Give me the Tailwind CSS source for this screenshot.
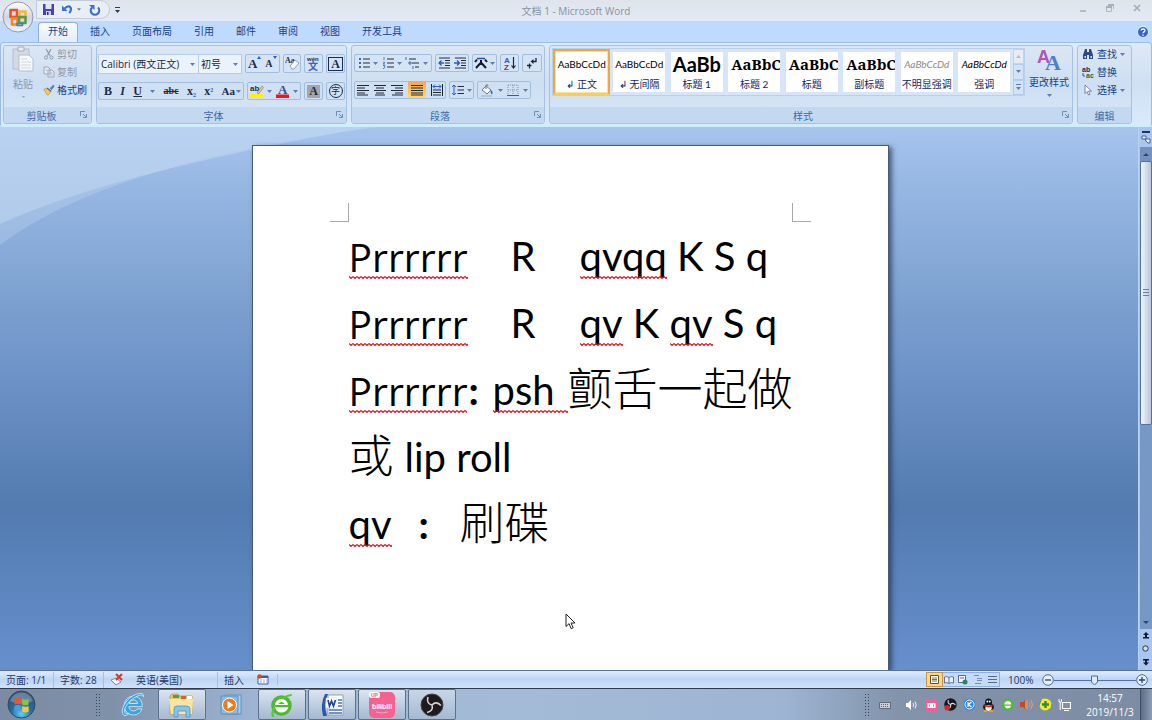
<!DOCTYPE html>
<html lang="zh-CN">
<head>
<meta charset="utf-8">
<title>文档 1 - Microsoft Word</title>
<script src="https://cdn.jsdelivr.net/npm/@tailwindcss/browser@4"></script>
</head>
<body class="flex h-screen flex-col overflow-hidden bg-[#bfd9fe] font-['Open_Sans','Noto_Sans_CJK_SC',sans-serif] text-[10px] leading-4 text-[#15428b] select-none">

<svg class="absolute" width="0" height="0">
  <defs>
    <pattern id="wave" width="4" height="3" patternUnits="userSpaceOnUse"><path d="M0 .5L2 2.5L4 .5" fill="none" stroke="#dc1420" stroke-width="1.200"/></pattern>
    <linearGradient id="orb" x1="0" y1="0" x2="0" y2="1"><stop offset="0" stop-color="#fff"/><stop offset=".5" stop-color="#cfd6e2"/><stop offset="1" stop-color="#f2f5fa"/></linearGradient>
    <radialGradient id="winorb" cx=".5" cy=".85" r=".8"><stop offset="0" stop-color="#5fd0f5"/><stop offset=".5" stop-color="#23699f"/><stop offset="1" stop-color="#39536f"/></radialGradient>
  </defs>
  <symbol id="caret" viewBox="0 0 5 3"><path d="M0 0h5L2.500 3z" fill="#5a7fb5"/></symbol>
  <symbol id="launch" viewBox="0 0 7 7"><path d="M.5 5V.5H5M3 3l3 3M6.500 3v3.500H3" fill="none" stroke="#6c8fc0"/></symbol>
  <symbol id="cut" viewBox="0 0 12 12"><path d="M3 1l4 6.500M8 1L4.500 7.500" stroke="#8e9aae" stroke-width="1.300" fill="none"/><circle cx="3" cy="9.500" r="1.600" fill="none" stroke="#8e9aae"/><circle cx="8.500" cy="9.500" r="1.600" fill="none" stroke="#8e9aae"/></symbol>
  <symbol id="copy" viewBox="0 0 12 12"><path d="M1 1h4l2 2v5H1zM5 4h4l2 2v5H5z" fill="#e9eef6" stroke="#9aa6ba"/><path d="M6.500 7h3M6.500 9h3M2.500 4h2" stroke="#a9b4c6"/></symbol>
  <symbol id="brush" viewBox="0 0 14 12"><path d="M8 4l4-4 1.500 1.500L10 6z" fill="#5779b8"/><path d="M5 3l5 4-1 1.500L4 5z" fill="#49608a"/><path d="M1 5l3-1 5 4-3 4-2-1-1-2z" fill="#efc75c" stroke="#b98a2c" stroke-width=".6"/></symbol>
  <symbol id="bullets" viewBox="0 0 12 12"><path d="M5 2h7M5 6h7M5 10h7" stroke="#222c40" stroke-width="1.200"/><path d="M1 1h2v2H1zM1 5h2v2H1zM1 9h2v2H1z" fill="#4068b0"/></symbol>
  <symbol id="numbers" viewBox="0 0 12 12"><path d="M5 2h7M5 6h7M5 10h7" stroke="#222c40" stroke-width="1.200"/><path d="M2 0v3M1 5h1.500v1L1 7h2M1 8.500h2L2 10l1 .5-1 1H1" fill="none" stroke="#4068b0" stroke-width=".8"/></symbol>
  <symbol id="multi" viewBox="0 0 14 12"><path d="M4 2h7M7 6h7M10 10h4" stroke="#222c40" stroke-width="1.200"/><path d="M1 0v3M4 5h2v2H4zM8 9v3" fill="none" stroke="#4068b0"/></symbol>
  <symbol id="outdent" viewBox="0 0 12 12"><path d="M1 1h11M7 3.500h5M7 6h5M7 8.500h5M1 11h11" stroke="#222c40"/><path d="M6 6H1M3.500 3.500L1 6l2.500 2.500" stroke="#2a5cc0" stroke-width="1.300" fill="none"/></symbol>
  <symbol id="indent" viewBox="0 0 12 12"><path d="M1 1h11M7 3.500h5M7 6h5M7 8.500h5M1 11h11" stroke="#222c40"/><path d="M0 6h5M3 3.500L5.500 6 3 8.500" stroke="#2a5cc0" stroke-width="1.300" fill="none"/></symbol>
  <symbol id="aleft" viewBox="0 0 12 12"><path d="M0 1.500h12M0 4h8M0 6.500h12M0 9h8M0 11h11" stroke="#1d2638" stroke-width="1.200"/></symbol>
  <symbol id="acenter" viewBox="0 0 12 12"><path d="M0 1.500h12M2 4h8M0 6.500h12M2 9h8M1 11h10" stroke="#1d2638" stroke-width="1.200"/></symbol>
  <symbol id="aright" viewBox="0 0 12 12"><path d="M0 1.500h12M4 4h8M0 6.500h12M4 9h8M1 11h11" stroke="#1d2638" stroke-width="1.200"/></symbol>
  <symbol id="ajust" viewBox="0 0 12 12"><path d="M0 1.500h12M0 4h12M0 6.500h12M0 9h12M0 11h12" stroke="#1d2638" stroke-width="1.200"/></symbol>
  <symbol id="adist" viewBox="0 0 12 12"><path d="M.5 0v12M11.500 0v12M2 6h8M2 8.500h8M2 11h8" stroke="#1d2638" stroke-width="1.100"/><path d="M2 2.500h8M4 .5L2 2.500l2 2M8 .5l2 2-2 2" stroke="#2a5cc0" fill="none"/></symbol>
  <symbol id="spacing" viewBox="0 0 12 12"><path d="M5.500 2.500H12M5.500 6H12M5.500 9.500H12" stroke="#222c40" stroke-width="1.200"/><path d="M2 1v10M0 3l2-2 2 2M0 9l2 2 2-2" fill="none" stroke="#2a5cc0"/></symbol>
  <symbol id="win" viewBox="0 0 12 12"><path d="M1 2q2-1.500 4.500 0v4Q3 4.800 1 6z" fill="#e8582a"/><path d="M6.500 2Q9 3.200 11 2v4Q9 7.200 6.500 6z" fill="#8cc04a"/><path d="M1 7q2-1.200 4.500 0v4Q3 9.800 1 11z" fill="#4a9be0"/><path d="M6.500 7Q9 8.200 11 7v4Q9 12.200 6.500 11z" fill="#f6c63c"/></symbol>
  <symbol id="eglyph" viewBox="0 0 24 24"><path d="M20.500 13.500H8.200c.3 2.600 2 4 4.200 4 1.800 0 2.900-.7 3.600-1.900h4.200C19 19.300 16 21.200 12.300 21.200 7.300 21.200 4 17.600 4 12.600 4 7.500 7.500 4 12.400 4c5 0 8.300 3.500 8.100 9.500zM8.400 10.600h8c-.3-2-1.700-3.300-4-3.300s-3.700 1.300-4 3.300z"/><path d="M3.500 21.500C-1 17 6 5.500 14.500 2.300 18.500.8 22.300.8 21.600 4.300c0-1.800-2.500-2-6.100-.3C8.500 7.500 3.500 14.500 4.200 18.200c.4 2 2.500 2 4.300 1.400-1.500 1.600-3.600 2.600-5 1.900z"/></symbol>
</svg>

<!-- Title bar -->
<header class="flex shrink-0 bg-gradient-to-b from-[#dfe4ec] to-[#e3eaf5]">
  <div class="relative flex h-[21px] w-full items-center">
    <button class="absolute top-px left-[2px] z-10" aria-label="Office 按钮">
      <svg width="32" height="32" viewBox="0 0 32 32"><circle cx="16" cy="16" r="15" fill="url(#orb)" stroke="#8d9bb3"/><g fill="none" stroke-width="2.600" stroke-linejoin="round"><path d="M8.500 9h6.500v7H8.500z" stroke="#e8532a"/><path d="M17.500 10.500h6v6h-6z" stroke="#f4b63a"/><path d="M10 17.500h5.500v6H10z" stroke="#f08a2a"/><path d="M17 16h6.500v6H17z" stroke="#5a9a48"/><path d="M15 22.500h5.500v2H15z" stroke="#3f7fd0" stroke-width="1.600"/></g></svg>
    </button>
    <div class="ml-9 flex h-[19px] items-center gap-[8px] self-start rounded-r-full border border-[#c3cbd9] bg-[#e9edf4] pr-2 pl-[6px]">
      <button aria-label="保存"><svg width="11" height="11" viewBox="0 0 11 11"><path d="M0 0h11v11H0z" fill="#4b44a8"/><path d="M2.500 0h6v5h-6z" fill="#dfe4f6"/><path d="M3 7h5v4H3z" fill="#c9cfe8"/><path d="M4 8h1.500v3H4z" fill="#332c80"/></svg></button>
      <button class="flex items-center gap-1" aria-label="撤消"><svg width="11" height="11" viewBox="0 0 12 11"><path d="M3 4.500C8-1 12 4 8 9.500" fill="none" stroke="#3b6fce" stroke-width="2.400"/><path d="M0 1v6h6z" fill="#3b6fce"/></svg><svg width="4" height="3"><use href="#caret"/></svg></button>
      <button aria-label="恢复"><svg width="12" height="12" viewBox="0 0 12 12"><path d="M9 3.500a4.200 4.200 0 1 1-6 0" fill="none" stroke="#3b6fce" stroke-width="2.200"/><path d="M0 1h5.500v5z" fill="#3b6fce"/></svg></button>
    </div>
    <svg class="ml-[5px]" width="5" height="7" viewBox="0 0 5 7"><path d="M0 .5h5" stroke="#2b3a55"/><path d="M0 3h5L2.500 6z" fill="#2b3a55"/></svg>
    <h1 class="absolute inset-x-0 top-[3px] text-center text-[10px] text-[#8b92a0]">文档 1 - Microsoft Word</h1>
    <div class="absolute top-[3px] right-[11px] flex gap-[19px] text-[#8d94a0]">
      <button aria-label="最小化"><svg width="8" height="10" viewBox="0 0 8 10"><path d="M1 8h6" stroke="#a7acb5" stroke-width="1.500"/></svg></button>
      <button aria-label="还原"><svg width="8" height="10" viewBox="0 0 8 10"><path d="M2 2h5.500v4M.5 4h5v4.500h-5z" fill="none" stroke="#b3b8c0"/><path d="M2 2h6M0 4h6" stroke="#a0a6b0" stroke-width="1.300"/></svg></button>
      <button aria-label="关闭"><svg width="8" height="10" viewBox="0 0 8 10"><path d="M1 2l6 6M7 2L1 8" stroke="#a7acb5" stroke-width="1.600"/></svg></button>
    </div>
  </div>
</header>

<!-- Ribbon tabs -->
<nav class="flex h-[21px] shrink-0 items-end bg-[#bfdaff] pr-[3px] pl-[38px] text-[#15428b]">
  <a href="#" class="h-[20px] rounded-t-sm border border-b-0 border-[#8db2e3] bg-gradient-to-b from-[#f7fbff] to-[#e2edf9] px-[9px] leading-4">开始</a>
  <a href="#" class="h-[20px] pr-[11px] pl-[12px] leading-[18px]">插入</a>
  <a href="#" class="h-[20px] px-[11px] leading-[18px]">页面布局</a>
  <a href="#" class="h-[20px] px-[11px] leading-[18px]">引用</a>
  <a href="#" class="h-[20px] px-[11px] leading-[18px]">邮件</a>
  <a href="#" class="h-[20px] px-[11px] leading-[18px]">审阅</a>
  <a href="#" class="h-[20px] px-[11px] leading-[18px]">视图</a>
  <a href="#" class="h-[20px] px-[11px] leading-[18px]">开发工具</a>
  <button class="mb-1 ml-auto" aria-label="帮助"><svg width="12" height="12" viewBox="0 0 12 12"><circle cx="6" cy="6" r="5.500" fill="#2f62c4" stroke="#e8f0ff"/><path d="M4 4.500c.3-2 4-2 4 0C8 6 6 5.800 6 7.300M6 8.500v1.300" stroke="#fff" stroke-width="1.400" fill="none"/></svg></button>
</nav>

<!-- Ribbon -->
<section class="flex h-[85px] shrink-0 gap-1 rounded-sm border border-b-2 border-[#9dbde8] border-b-[#c8f0fb] bg-gradient-to-b from-[#dfe9f7] via-[#cfe0f3] to-[#d8ebfb] pt-[2px] pr-1 pb-px pl-[2px]">

  <div class="flex w-[89px] shrink-0 flex-col overflow-hidden rounded-[3px] border border-[#a6c2e3] bg-gradient-to-b from-[#dbe6f4] via-[#cddff2] to-[#d6e7f6]">
    <div class="flex flex-1 gap-[9px] pl-2 text-[#8e97a6]">
      <button class="flex flex-col items-center leading-[14px]">
        <svg width="22" height="26" viewBox="0 0 22 26"><path d="M1 3h16v20H1z" fill="#d3dae5" stroke="#b4bfce"/><path d="M6 1h6v4H6z" fill="#e9edf3" stroke="#a1adbf"/><path d="M7 9h10l4 4v12H7z" fill="#f6f8fb" stroke="#b4bfce"/><path d="M9 13h6M9 16h10M9 19h10M9 22h10" stroke="#d0d8e4"/></svg>
        <span class="mt-[5px]">粘贴</span>
        <svg width="3" height="2" class="mt-[5px] opacity-60"><use href="#caret"/></svg>
      </button>
      <div class="flex flex-col gap-[2px]">
        <button class="flex h-4 items-center gap-[2px]"><svg width="12" height="12"><use href="#cut"/></svg>剪切</button>
        <button class="flex h-4 items-center gap-[2px]"><svg width="12" height="12"><use href="#copy"/></svg>复制</button>
        <button class="flex h-4 items-center gap-[2px] text-[#15428b]"><svg width="12" height="12"><use href="#brush"/></svg>格式刷</button>
      </div>
    </div>
    <div class="relative h-[16px] bg-[#c2d9f1] pr-3 text-center leading-[18px] text-[#3e6aaa]">剪贴板<button class="absolute top-1 right-[4px]" aria-label="剪贴板选项"><svg width="7" height="7"><use href="#launch"/></svg></button></div>
  </div>

  <div class="flex w-[251px] shrink-0 flex-col overflow-hidden rounded-[3px] border border-[#a6c2e3] bg-gradient-to-b from-[#dbe6f4] via-[#cddff2] to-[#d6e7f6]">
    <div class="flex flex-1 flex-col gap-[8px] px-px pt-2">
      <div class="flex gap-[3px]">
        <div class="flex">
          <label class="relative flex h-[20px] items-center border border-[#b6cde9] bg-[#eaf2fb]"><select aria-label="字体" class="w-[99px] appearance-none bg-transparent pl-[2px] text-[10px] text-[#1b2a48]"><option>Calibri (西文正文)</option></select><svg class="absolute right-[3px]" width="5" height="3"><use href="#caret"/></svg></label>
          <label class="relative flex h-[20px] items-center border border-l-0 border-[#b6cde9] bg-[#eaf2fb]"><select aria-label="字号" class="w-[42px] appearance-none bg-transparent pl-[2px] text-[10px] text-[#1b2a48]"><option>初号</option></select><svg class="absolute right-[3px]" width="5" height="3"><use href="#caret"/></svg></label>
        </div>
        <div class="flex h-[19px] w-[35px] items-center justify-around rounded-xs border border-[#a3bddf] bg-[#d5e4f5] font-['Liberation_Serif'] font-bold text-[#1d2b4a]">
          <button class="flex text-[13px]" aria-label="增大字体">A<svg width="4" height="3" viewBox="0 0 4 3"><path d="M2 0l2 3H0z" fill="#2a5cc0"/></svg></button>
          <button class="flex text-[10px]" aria-label="缩小字体">A<svg width="4" height="3" viewBox="0 0 4 3"><path d="M0 0h4L2 3z" fill="#2a5cc0"/></svg></button>
        </div>
        <button class="flex h-[19px] w-[19px] items-center justify-center rounded-xs border border-[#a3bddf] bg-[#d5e4f5]" aria-label="清除格式"><svg width="15" height="15" viewBox="0 0 15 15"><text x="0" y="7" font-size="8" font-weight="700" font-family="Liberation Serif" fill="#1d2b4a">Aa</text><path d="M5 10l5-6 4 3-5 6H7z" fill="#f6f7fb" stroke="#7b89a5" stroke-width=".8"/></svg></button>
        <button class="flex h-[19px] w-[19px] items-center justify-center rounded-xs border border-[#a3bddf] bg-[#d5e4f5]" aria-label="拼音指南"><svg width="15" height="16" viewBox="0 0 15 16"><text x="1" y="5" font-size="6" font-weight="700" font-family="Liberation Sans" fill="#1d2b4a">wén</text><text x="2" y="14" font-size="10" font-weight="700" font-family="Noto Sans CJK SC" fill="#3d62b4">文</text></svg></button>
        <button class="flex h-[19px] w-[19px] items-center justify-center rounded-xs border border-[#a3bddf] bg-[#d5e4f5]" aria-label="字符边框"><span class="border border-[#1d2b4a] px-[2px] font-['Liberation_Serif'] text-[12px] leading-[12px] font-bold text-[#1d2b4a]">A</span></button>
      </div>
      <div class="flex gap-[3px]">
        <div class="flex h-[18px] w-[146px] items-center justify-between rounded-xs border border-[#a3bddf] bg-[#d0e0f3] pr-[2px] pl-[5px] font-['Liberation_Serif'] text-[12px] font-bold text-[#1d2b4a]">
          <button>B</button>
          <button class="italic">I</button>
          <button class="underline">U</button>
          <svg width="5" height="3"><use href="#caret"/></svg>
          <button class="text-[10px] line-through">abc</button>
          <button>x<sub class="text-[6px] text-[#2a5cc0]">2</sub></button>
          <button>x<sup class="text-[6px] text-[#2a5cc0]">2</sup></button>
          <button class="flex items-center gap-px text-[11px]">Aa<svg width="5" height="3"><use href="#caret"/></svg></button>
        </div>
        <div class="flex h-[18px] w-[54px] items-center justify-between rounded-xs border border-[#a3bddf] bg-[#d0e0f3] px-[2px]">
          <button aria-label="突出显示"><svg width="14" height="14" viewBox="0 0 14 14"><text x="0" y="7" font-size="8" font-weight="700" font-family="Liberation Sans" fill="#1d2b4a">ab</text><path d="M7 9l5-7 1.500 1.500L9 9.500z" fill="#f0c860" stroke="#6e7f9d" stroke-width=".6"/><path d="M0 10h13v3.500H0z" fill="#ffee10"/></svg></button>
          <svg width="5" height="3"><use href="#caret"/></svg>
          <button aria-label="字体颜色"><svg width="14" height="14" viewBox="0 0 14 14"><text x="2" y="10" font-size="13" font-weight="700" font-family="Liberation Serif" fill="#2d4f98">A</text><path d="M0 10.500h13V14H0z" fill="#ea1425"/></svg></button>
          <svg width="5" height="3"><use href="#caret"/></svg>
        </div>
        <button class="flex h-[18px] w-[19px] items-center justify-center rounded-xs border border-[#a3bddf] bg-[#d0e0f3]" aria-label="字符底纹"><span class="bg-[#a6a6a6] px-[2px] font-['Liberation_Serif'] text-[12px] leading-[13px] font-bold text-[#1d2b4a]">A</span></button>
        <button class="flex h-[18px] w-[19px] items-center justify-center rounded-xs border border-[#a3bddf] bg-[#d0e0f3]" aria-label="带圈字符"><span class="h-[14px] w-[14px] rounded-full border border-[#1d2b4a] text-[9px] leading-[12px] text-[#1d2b4a]">字</span></button>
      </div>
    </div>
    <div class="relative h-[16px] bg-[#c2d9f1] pr-4 text-center leading-[18px] text-[#3e6aaa]">字体<button class="absolute top-1 right-[3px]" aria-label="字体选项"><svg width="7" height="7"><use href="#launch"/></svg></button></div>
  </div>

  <div class="flex w-[194px] shrink-0 flex-col overflow-hidden rounded-[3px] border border-[#a6c2e3] bg-gradient-to-b from-[#dbe6f4] via-[#cddff2] to-[#d6e7f6]">
    <div class="flex flex-1 flex-col gap-[9px] px-[2px] pt-2">
      <div class="flex gap-[3px]">
        <div class="flex h-[18px] w-[78px] items-center justify-between rounded-xs border border-[#a3bddf] bg-[#d5e4f5] px-[3px]">
          <button aria-label="项目符号"><svg width="12" height="12"><use href="#bullets"/></svg></button><svg width="5" height="3"><use href="#caret"/></svg>
          <button aria-label="编号"><svg width="12" height="12"><use href="#numbers"/></svg></button><svg width="5" height="3"><use href="#caret"/></svg>
          <button aria-label="多级列表"><svg width="14" height="12"><use href="#multi"/></svg></button><svg width="5" height="3"><use href="#caret"/></svg>
        </div>
        <div class="flex h-[18px] w-[35px] items-center justify-around rounded-xs border border-[#a3bddf] bg-[#d5e4f5]">
          <button aria-label="减少缩进量"><svg width="12" height="12"><use href="#outdent"/></svg></button>
          <button aria-label="增加缩进量"><svg width="12" height="12"><use href="#indent"/></svg></button>
        </div>
        <button class="flex h-[18px] w-[25px] items-center justify-around rounded-xs border border-[#a3bddf] bg-[#d5e4f5]" aria-label="中文版式"><svg width="14" height="12" viewBox="0 0 14 12"><path d="M2 11L7 5.500 12 11M7 6V3M1 5L3 2.500M13 5L11 2.500" stroke="#111a2c" stroke-width="2" fill="none"/><path d="M3 1.500h8" stroke="#2a4f98" stroke-width="1.300"/></svg><svg width="5" height="3"><use href="#caret"/></svg></button>
        <button class="flex h-[18px] w-[19px] items-center justify-center rounded-xs border border-[#a3bddf] bg-[#d5e4f5]" aria-label="排序"><svg width="14" height="14" viewBox="0 0 14 14"><text x="1" y="6.500" font-size="8" font-weight="700" font-family="Liberation Sans" fill="#2a5cc0">A</text><text x="1" y="13.500" font-size="8" font-weight="700" font-family="Liberation Sans" fill="#b02038">Z</text><path d="M10.500 1v11M8.500 9.500l2 2.500 2-2.500" stroke="#1d2638" fill="none" stroke-width="1.200"/></svg></button>
        <button class="flex h-[18px] w-[20px] items-center justify-center rounded-xs border border-[#a3bddf] bg-[#d5e4f5]" aria-label="显示编辑标记"><svg width="12" height="12" viewBox="0 0 12 12"><path d="M10 1v3.500H6" stroke="#1d2638" fill="none" stroke-width="1.300"/><path d="M4.500 4.500l3-2.500v5z" fill="#1d2638"/><path d="M5.500 8.500H1M3.500 6.500v5" stroke="#1d2638" fill="none" stroke-width="1.300"/></svg></button>
      </div>
      <div class="flex gap-[3px]">
        <div class="flex h-[18px] w-[92px] items-center justify-around rounded-xs border border-[#a3bddf] bg-[#d0e0f3]">
          <button aria-label="文本左对齐"><svg width="12" height="12"><use href="#aleft"/></svg></button>
          <button aria-label="居中"><svg width="12" height="12"><use href="#acenter"/></svg></button>
          <button aria-label="文本右对齐"><svg width="12" height="12"><use href="#aright"/></svg></button>
          <button class="flex h-4 w-[18px] items-center justify-center bg-gradient-to-b from-[#f5a84e] to-[#ffd872]" aria-label="两端对齐"><svg width="12" height="12"><use href="#ajust"/></svg></button>
          <button aria-label="分散对齐"><svg width="12" height="12"><use href="#adist"/></svg></button>
        </div>
        <button class="flex h-[18px] w-[25px] items-center justify-around rounded-xs border border-[#a3bddf] bg-[#d0e0f3]" aria-label="行距"><svg width="12" height="12"><use href="#spacing"/></svg><svg width="5" height="3"><use href="#caret"/></svg></button>
        <div class="flex h-[18px] w-[54px] items-center justify-between rounded-xs border border-[#a3bddf] bg-[#d0e0f3] px-[2px]">
          <button aria-label="底纹"><svg width="14" height="13" viewBox="0 0 14 13"><path d="M2 6l4-4 5 4-4 4z" fill="#f4f6fa" stroke="#6b7b98"/><path d="M6 5V1q2-1 2 1" stroke="#6b7b98" fill="none"/><path d="M11 6q2.500 2 1 4.500-2-1-1-4.500z" fill="#3568b8"/><path d="M1 12h11" stroke="#bcc5d3" stroke-width="2"/></svg></button>
          <svg width="5" height="3"><use href="#caret"/></svg>
          <button aria-label="边框"><svg width="12" height="12" viewBox="0 0 12 12"><path d="M1 1h10v10M1 1v10M6 1v10M1 6h10" stroke="#8593ad" stroke-dasharray="1 1" fill="none"/><path d="M0 11.500h12" stroke="#4b5a76"/></svg></button>
          <svg width="5" height="3"><use href="#caret"/></svg>
        </div>
      </div>
    </div>
    <div class="relative h-[16px] bg-[#c2d9f1] pr-4 text-center leading-[18px] text-[#3e6aaa]">段落<button class="absolute top-1 right-[3px]" aria-label="段落选项"><svg width="7" height="7"><use href="#launch"/></svg></button></div>
  </div>

  <div class="flex min-w-0 flex-1 flex-col overflow-hidden rounded-[3px] border border-[#a6c2e3] bg-gradient-to-b from-[#dbe6f4] via-[#cddff2] to-[#d6e7f6]">
    <div class="flex flex-1 items-start gap-px pt-[2px] pl-[2px]">
      <div class="flex h-[48px] flex-1 border border-[#b9d0ed] bg-[#d6e5f7] text-center font-['Lato','Noto_Sans_CJK_SC'] text-[#0f1f66]">
        <div class="grid flex-1 grid-cols-8 items-center justify-items-center">
          <button class="h-[46px] w-[57px] border-2 border-[#eea63f] border-b-[#f8cf4f] bg-white leading-[14px] outline-1 -outline-offset-3 outline-[#fbe0a5]"><span class="block h-[23px] overflow-hidden text-[10px] leading-[21px] text-black">AaBbCcDd</span>↲ 正文</button>
          <button class="h-[40px] w-[52px] bg-white leading-[14px]"><span class="block h-[23px] overflow-hidden text-[10px] leading-[21px] text-black">AaBbCcDd</span>↲ 无间隔</button>
          <button class="h-[40px] w-[52px] bg-white leading-[14px]"><span class="block h-[23px] overflow-hidden pl-[2px] text-left text-[20px] leading-[21px] font-bold text-black">AaBb</span>标题 1</button>
          <button class="h-[40px] w-[52px] bg-white leading-[14px]"><span class="block h-[23px] overflow-hidden pl-[3px] text-left font-['Noto_Serif','Liberation_Serif'] text-[15px] leading-[21px] font-bold text-black">AaBbC</span>标题 2</button>
          <button class="h-[40px] w-[52px] bg-white leading-[14px]"><span class="block h-[23px] overflow-hidden pl-[3px] text-left font-['Noto_Serif','Liberation_Serif'] text-[15px] leading-[21px] font-bold text-black">AaBbC</span>标题</button>
          <button class="h-[40px] w-[52px] bg-white leading-[14px]"><span class="block h-[23px] overflow-hidden pl-[3px] text-left font-['Noto_Serif','Liberation_Serif'] text-[15px] leading-[21px] font-bold text-black">AaBbC</span>副标题</button>
          <button class="h-[40px] w-[52px] bg-white leading-[14px] whitespace-nowrap"><span class="block h-[23px] overflow-hidden text-[10px] leading-[21px] text-[#8a8a8a] italic">AaBbCcDd</span>不明显强调</button>
          <button class="h-[40px] w-[52px] bg-white leading-[14px]"><span class="block h-[23px] overflow-hidden text-[10px] leading-[21px] text-black italic">AaBbCcDd</span>强调</button>
        </div>
        <div class="flex h-full flex-col">
          <button class="flex w-[11px] flex-1 items-center justify-center border border-[#c9d3e0] bg-[#e8ebf0]" aria-label="上一行"><svg width="5" height="3" class="rotate-180 opacity-40"><use href="#caret"/></svg></button>
          <button class="flex w-[11px] flex-1 items-center justify-center border border-[#b4cceb] bg-[#d3e3f6]" aria-label="下一行"><svg width="5" height="3"><use href="#caret"/></svg></button>
          <button class="flex w-[11px] flex-1 items-center justify-center border border-[#b4cceb] bg-[#d3e3f6]" aria-label="其他"><svg width="5" height="6" viewBox="0 0 5 6"><path d="M0 .5h5" stroke="#5a7fb5"/><path d="M0 3h5L2.500 6z" fill="#5a7fb5"/></svg></button>
        </div>
      </div>
      <button class="flex w-[46px] shrink-0 flex-col items-center"><svg width="26" height="24" viewBox="0 0 26 24"><text x="1" y="15" font-size="18" font-weight="700" font-family="Liberation Sans" fill="#b254b8">A</text><text x="9" y="22" font-size="22" font-weight="700" font-family="Liberation Serif" fill="#4c7fcb">A</text></svg><span class="mt-[2px]">更改样式</span><svg width="5" height="3" class="mt-[4px]"><use href="#caret"/></svg></button>
    </div>
    <div class="relative h-[16px] bg-[#c2d9f1] pr-4 text-center leading-[18px] text-[#3e6aaa]">样式<button class="absolute top-1 right-[3px]" aria-label="样式选项"><svg width="7" height="7"><use href="#launch"/></svg></button></div>
  </div>

  <div class="mr-[15px] flex w-[55px] shrink-0 flex-col overflow-hidden rounded-[3px] border border-[#a6c2e3] bg-gradient-to-b from-[#dbe6f4] via-[#cddff2] to-[#d6e7f6]">
    <div class="flex flex-1 flex-col gap-[2px] pl-[4px]">
      <button class="flex h-4 items-center gap-[3px]"><svg width="12" height="12" viewBox="0 0 12 12"><path d="M3 1h2v3h2V1h2l2 6v4H7V7H5v4H1V7z" fill="#2c4a86"/><path d="M2.500 8h1.500v2H2.500zM8.500 8H10v2H8.500z" fill="#cfe0f7"/></svg>查找<svg width="5" height="3"><use href="#caret"/></svg></button>
      <button class="flex h-4 items-center gap-[3px]"><svg width="12" height="12" viewBox="0 0 12 12"><text x="0" y="5.500" font-size="7" font-weight="700" font-family="Liberation Sans" fill="#1d2b4a">ab</text><text x="4" y="11.500" font-size="7" font-weight="700" font-family="Liberation Sans" fill="#24683c">ac</text><path d="M1 7v3h2" fill="none" stroke="#2a5cc0"/></svg>替换</button>
      <button class="flex h-4 items-center gap-[3px]"><svg width="12" height="12" viewBox="0 0 12 12"><path d="M3 1v8.500l2-2 1.500 3.500 1.500-.7-1.500-3.300H9.500z" fill="#fff" stroke="#60708c" stroke-width=".8"/></svg>选择<svg width="5" height="3"><use href="#caret"/></svg></button>
    </div>
    <div class="h-[16px] bg-[#c2d9f1] text-center leading-[18px] text-[#3e6aaa]">编辑</div>
  </div>
</section>

<!-- Document area -->
<main class="flex min-h-0 flex-1">
  <div class="relative flex flex-1 justify-center overflow-hidden bg-[linear-gradient(180deg,#a6c4ee_0%,#98b8e4_10%,#7a9fce_34%,#6b90c6_48%,#537bb0_70%,#6690cd_100%)] pt-[18px]">
    <svg class="absolute top-0 left-0" width="420" height="130" viewBox="0 0 420 130"><path d="M0 0H380Q110 35 0 118z" fill="#c8dcf2" fill-opacity=".3"/><path d="M0 0H370Q110 46 0 97z" fill="#c4daf1" fill-opacity=".5"/></svg>
    <article class="relative flex w-[637px] translate-x-px flex-col border-x border-t border-[#4a5a72] bg-white pt-[57px] text-black shadow-[3px_2px_5px_rgba(30,50,85,.7)]">
      <div class="flex justify-between px-[77px]">
        <span class="h-[19px] w-[19px] border-r border-b border-[#a9a9a9]"></span>
        <span class="h-[19px] w-[19px] border-b border-l border-[#a9a9a9]"></span>
      </div>
      <div class="pt-px pl-[96px] font-['Lato','Noto_Sans_CJK_SC',sans-serif] text-[40px] leading-[67px]">
        <p class="flex h-[67px] whitespace-pre"><span class="relative w-[162px] font-['Open_Sans'] text-[39px]">Prrrrrr<svg class="absolute bottom-[11px] left-0" width="119" height="3"><rect width="100%" height="3" fill="url(#wave)"/></svg></span><span class="w-[69px]">R</span><span class="relative">qvqq<svg class="absolute bottom-[11px] left-0" width="100%" height="3"><rect width="100%" height="3" fill="url(#wave)"/></svg></span><span> K S q</span></p>
        <p class="flex h-[67px] whitespace-pre"><span class="relative w-[162px] font-['Open_Sans'] text-[39px]">Prrrrrr<svg class="absolute bottom-[11px] left-0" width="119" height="3"><rect width="100%" height="3" fill="url(#wave)"/></svg></span><span class="w-[69px]">R</span><span class="relative">qv<svg class="absolute bottom-[11px] left-0" width="100%" height="3"><rect width="100%" height="3" fill="url(#wave)"/></svg></span><span> K </span><span class="relative">qv<svg class="absolute bottom-[11px] left-0" width="100%" height="3"><rect width="100%" height="3" fill="url(#wave)"/></svg></span><span> S q</span></p>
        <p class="flex h-[67px] whitespace-pre"><span class="relative w-[118px] font-['Open_Sans'] text-[39px]">Prrrrrr<svg class="absolute bottom-[11px] left-0" width="100%" height="3"><rect width="100%" height="3" fill="url(#wave)"/></svg></span><span class="w-[26px] pl-[2px] font-bold">:</span><span class="relative w-[75px]">psh <svg class="absolute bottom-[11px] left-0" width="100%" height="3"><rect width="100%" height="3" fill="url(#wave)"/></svg></span><span class="text-[45px] leading-[65px] font-light">颤舌一起做</span></p>
        <p class="flex h-[67px] whitespace-pre"><span class="w-[56px] text-[45px] leading-[65px] font-light">或</span><span>lip roll</span></p>
        <p class="flex h-[67px] whitespace-pre"><span class="relative w-[68px]">qv<svg class="absolute bottom-[11px] left-0" width="43" height="3"><rect width="100%" height="3" fill="url(#wave)"/></svg></span><span class="w-[43px] pl-[2px] font-bold">:</span><span class="text-[45px] leading-[65px] font-light">刷碟</span></p>
      </div>
      <svg class="absolute top-[467px] left-[312px]" width="11" height="17" viewBox="0 0 11 17"><path d="M1 1v12.500l3-2.800 2.200 5 2-.9L6 10h4z" fill="#fff" stroke="#222"/></svg>
    </article>
  </div>

  <!-- Vertical scroll bar -->
  <aside class="flex w-[14px] shrink-0 flex-col items-center border-l border-[#b9d3f5] bg-[#a9c6ef]">
    <svg class="mt-1 mb-[2px]" width="10" height="14" viewBox="0 0 10 14"><path d="M1 1h8" stroke="#1e3566" stroke-width="2"/><path d="M1 5h4v3H1zM4 8h5v4H7l-2-2z" fill="#eef4fc" stroke="#4b618c"/></svg>
    <button class="flex h-[14px] w-3 items-center justify-center bg-[#7592be]" aria-label="向上滚动"><svg width="6" height="3" viewBox="0 0 6 3"><path d="M0 3h6L3 0z" fill="#2c4678"/></svg></button>
    <div class="flex w-3 flex-1 flex-col bg-[#7798c5]">
      <div class="flex h-[58%] flex-col items-center justify-center gap-[2px] rounded-xs border border-[#54719e] bg-gradient-to-r from-[#f1f5fa] via-[#d5deea] to-[#b5c5dc]"><i class="h-px w-[6px] bg-[#6d80a2]"></i><i class="h-px w-[6px] bg-[#6d80a2]"></i><i class="h-px w-[6px] bg-[#6d80a2]"></i></div>
    </div>
    <button class="flex h-[13px] w-3 items-center justify-center bg-[#7798c5]" aria-label="向下滚动"><svg width="6" height="3" viewBox="0 0 6 3"><path d="M0 0h6L3 3z" fill="#2c4678"/></svg></button>
    <button class="flex h-[13px] items-center" aria-label="前一页"><svg width="6" height="7" viewBox="0 0 6 7"><path d="M3 0l3 3H0zM2 3h2v2H2zM0 5h6v1.500H0z" fill="#111d38"/></svg></button>
    <button class="flex h-[13px] items-center" aria-label="选择浏览对象"><svg width="7" height="7" viewBox="0 0 7 7"><circle cx="3.500" cy="3.500" r="2.700" fill="#d5dbe4" stroke="#26334f"/></svg></button>
    <button class="flex h-[15px] items-center" aria-label="下一页"><svg width="6" height="7" viewBox="0 0 6 7"><path d="M0 0h6v1.500H0zM2 1h2v3H2zM0 3.500h6l-3 3z" fill="#111d38"/></svg></button>
  </aside>
</main>

<!-- Status bar -->
<footer class="flex h-[18px] shrink-0 items-center border-t border-[#56739f] bg-gradient-to-b from-[#dfecfd] via-[#bdd5f5] to-[#d2e3fa] pr-1 pl-[6px] text-[#1d3766]">
  <span class="w-[48px] border-r border-[#a5c0e4]">页面: 1/1</span>
  <span class="w-[50px] border-r border-[#a5c0e4] pl-[6px] whitespace-nowrap">字数: 28</span>
  <button class="pl-[6px]" aria-label="拼写检查"><svg width="14" height="13" viewBox="0 0 14 13"><path d="M1 7l5-2 5 4-5 3z" fill="#f5f8fd" stroke="#5d7297" stroke-width=".8"/><path d="M6 1l6 6M12 1L6 7" stroke="#d8352a" stroke-width="2"/></svg></button>
  <span class="w-[94px] border-r border-[#a5c0e4] pl-3">英语(美国)</span>
  <span class="w-[39px] pl-[6px]">插入</span>
  <button class="border-r border-[#a5c0e4] pr-2" aria-label="宏"><svg width="12" height="11" viewBox="0 0 12 11"><path d="M1 2h10v8H1z" fill="#fff" stroke="#3a5da0"/><path d="M1 2h10v2H1z" fill="#3a5da0"/><path d="M3 6h7M3 8h7" stroke="#8ca6d6" stroke-dasharray="2 1"/><circle cx="2.500" cy="2.500" r="2.200" fill="#d14a2c"/></svg></button>
  <div class="ml-auto flex h-[15px] items-center border border-[#8fb0dc] bg-[#c4daf5]">
    <button class="flex h-[13px] w-[15px] items-center justify-center bg-[#ffd58a] outline-1 outline-[#c59645]" aria-label="页面视图"><svg width="9" height="9" viewBox="0 0 9 9"><path d="M.5.5h8v8h-8z" fill="#fff" stroke="#66502a"/><path d="M2 3h5M2 4.500h5M2 6h5" stroke="#66502a" stroke-width=".8"/></svg></button>
    <button class="flex w-[14px] justify-center" aria-label="阅读版式"><svg width="10" height="8" viewBox="0 0 10 8"><path d="M.5 1q2.500-1 4.500.5Q7 0 9.500 1v6Q7 6 5 7.500 3 6 .5 7zM5 1.500v6" fill="#e8effa" stroke="#56698f" stroke-width=".9"/></svg></button>
    <button class="flex w-[14px] justify-center" aria-label="Web 版式"><svg width="10" height="10" viewBox="0 0 10 10"><path d="M.5.5h7v7h-7z" fill="#f5f8fd" stroke="#56698f"/><path d="M2 3h4" stroke="#56698f"/><circle cx="7" cy="7" r="2.500" fill="#2e7f6a"/></svg></button>
    <button class="flex w-[15px] justify-center" aria-label="大纲视图"><svg width="8" height="9" viewBox="0 0 8 9"><path d="M0 .5h5M3 3.500h5M3 5.500h5M1 8.500h6" stroke="#7c8dab"/></svg></button>
    <button class="flex w-[14px] justify-center" aria-label="普通视图"><svg width="9" height="9" viewBox="0 0 9 9"><path d="M0 1.500h9M0 4.500h9M0 7.500h9" stroke="#56698f"/></svg></button>
  </div>
  <span class="ml-2 w-[34px] text-[10px]">100%</span>
  <button aria-label="缩小"><svg width="12" height="12" viewBox="0 0 12 12"><circle cx="6" cy="6" r="5.300" fill="#e6effb" stroke="#4f6a9a"/><path d="M3 6h6" stroke="#27406f" stroke-width="1.300"/></svg></button>
  <span class="relative flex w-[82px] items-center"><input type="range" aria-label="显示比例" class="absolute inset-0 h-3 w-full opacity-0"><svg width="82" height="12" viewBox="0 0 82 12"><path d="M0 6.500h82" stroke="#5273a8"/><path d="M37.500 2h6v6l-3 3-3-3z" fill="#dde9f9" stroke="#4f6a9a"/></svg></span>
  <button aria-label="放大"><svg width="12" height="12" viewBox="0 0 12 12"><circle cx="6" cy="6" r="5.300" fill="#e6effb" stroke="#4f6a9a"/><path d="M3 6h6M6 3v6" stroke="#27406f" stroke-width="1.300"/></svg></button>
</footer>

<!-- Task bar -->
<footer class="flex h-[32px] shrink-0 items-center border-t border-[#2e3b4e] bg-[linear-gradient(90deg,#7a8ba3_0%,#8092aa_10%,#9db5d2_22%,#a3bbd6_45%,#9db5d3_68%,#8293aa_78%,#7c8ca4_100%)]">
  <button class="ml-[7px]" aria-label="开始菜单"><svg width="29" height="29" viewBox="0 0 29 29"><circle cx="14.500" cy="14.500" r="13.500" fill="url(#winorb)" stroke="#34495f"/><path d="M3 11a12 12 0 0 1 23 0q-11 5-23 0z" fill="#fff" fill-opacity=".25"/><use href="#win" x="6" y="6" width="17" height="17"/></svg></button>
  <i class="ml-[59px] h-[24px] w-[7px] bg-[radial-gradient(#36465c_1px,transparent_1px)] bg-[size:3px_3px]"></i>
  <button class="ml-[18px] flex w-[26px] justify-center" aria-label="Internet Explorer"><svg width="26" height="26" viewBox="0 0 24 24" fill="#37a4e4" stroke="#e2f4fd" stroke-width=".7"><use href="#eglyph"/></svg></button>
  <button class="ml-[12px] flex h-[31px] w-[48px] items-center justify-center rounded-xs border border-[#5c6f8b] bg-gradient-to-b from-[#dbe4ef] to-[#a5b9d1] shadow-[inset_0_0_1px_#fff]" aria-label="资源管理器"><svg width="28" height="26" viewBox="0 0 28 26"><path d="M2 4l2-2h6l1 2h13v18H2z" fill="#e6c768" stroke="#bf9b3c" stroke-width=".8"/><path d="M5 3h6v3H5z" fill="#45a066"/><path d="M13 4h5v3h-5z" fill="#d95b48"/><path d="M19 4h5v3h-5z" fill="#fff"/><path d="M1 7h24l-1 15H3z" fill="#f8e5a0"/><path d="M6 25v-8q0-3 3-3h9q4 0 4 3v8h-4v-6h-8v6z" fill="#8ac4e8" stroke="#4e93c2" stroke-width=".8"/></svg></button>
  <button class="ml-[14px]" aria-label="媒体播放器"><svg width="22" height="22" viewBox="0 0 22 22"><path d="M5 1h16v19H5z" fill="#a9cfee" stroke="#5a92bf"/><path d="M1 2h17v18H1z" fill="#86bce4" stroke="#5a92bf"/><circle cx="9.500" cy="11" r="7" fill="#ef7a1c" stroke="#fff"/><path d="M7.500 7l6 4-6 4z" fill="#fff"/></svg></button>
  <div class="ml-[16px] flex gap-[2px]">
    <button class="flex h-[31px] w-[48px] items-center justify-center rounded-xs border border-[#5c6f8b] bg-gradient-to-b from-[#dbe4ef] to-[#a5b9d1]" aria-label="360 浏览器"><svg width="26" height="26" viewBox="0 0 24 24"><circle cx="11.500" cy="12.500" r="9.500" fill="#4fb82f"/><path d="M4 23C1 18 8 5 21 2.500" stroke="#5dc53a" stroke-width="2" fill="none"/><path d="M5.500 12a6 5.500 0 0 1 12 0zM5.500 14h12.500q-2 5-6.500 5t-6-5z" fill="#f6fff2"/><path d="M8.500 11h6q-3-3.500-6 0z" fill="#4fb82f"/></svg></button>
    <button class="flex h-[31px] w-[48px] items-center justify-center rounded-xs border border-[#5c6f8b] bg-gradient-to-b from-[#dbe4ef] to-[#a5b9d1]" aria-label="Word"><svg width="25" height="24" viewBox="0 0 25 24"><path d="M8 2h15v20H8z" fill="#fdfefe" stroke="#8da0c0"/><path d="M18 7h4M18 10h4M18 13h4M9 17h13M9 20h13" stroke="#4d6eaa" stroke-width="1.500"/><path d="M5 1q-5 10-2 22h4Q3 11 8 1z" fill="#2c58a5"/><path d="M6 5h11v10H6z" fill="#fff" stroke="#c9d5ea" stroke-width=".6"/><path d="M8 7l1.500 6L11.500 8l2 5L15.500 7" stroke="#1f4796" stroke-width="1.700" fill="none"/></svg></button>
    <button class="flex h-[31px] w-[48px] items-center justify-center rounded-xs border border-[#5c6f8b] bg-gradient-to-b from-[#dbe4ef] to-[#a5b9d1]" aria-label="bilibili"><svg width="26" height="26" viewBox="0 0 26 26"><rect width="26" height="26" rx="5" fill="#f2648f"/><rect width="11" height="6" rx="2" fill="#fff" fill-opacity=".9"/><text x="2" y="5" font-size="5" font-weight="700" font-family="Liberation Sans" fill="#f2648f">UP</text><text x="13" y="17" text-anchor="middle" font-size="7" font-weight="700" font-family="Liberation Sans" fill="#fff">bilibili</text><path d="M7 20q6 2 12 0" stroke="#f9a5bf" fill="none"/></svg></button>
    <button class="flex h-[31px] w-[48px] items-center justify-center rounded-xs border border-[#5c6f8b] bg-gradient-to-b from-[#c9d6e6] to-[#a5b9d1]" aria-label="OBS"><svg width="24" height="24" viewBox="0 0 24 24"><circle cx="12" cy="12" r="11" fill="#1d1b1e" stroke="#45434a"/><g fill="none" stroke="#d4d2d6" stroke-width="1.600"><path id="blade" d="M12 12Q6 10.500 8 4"/><use href="#blade" transform="rotate(120 12 12)"/><use href="#blade" transform="rotate(240 12 12)"/></g></svg></button>
  </div>
  <div class="ml-auto flex items-center gap-[6px]">
    <i class="mr-[2px] h-[24px] w-[7px] bg-[radial-gradient(#36465c_1px,transparent_1px)] bg-[size:3px_3px]"></i>
    <svg class="mr-[8px]" width="12" height="8" viewBox="0 0 12 8"><path d="M.5 1.500h11v6H.5z" fill="#c9ced6" stroke="#636b77"/><path d="M2 3.500h8M2 5.500h8" stroke="#636b77" stroke-dasharray="1 1"/></svg>
    <svg width="14" height="12" viewBox="0 0 14 12"><path d="M1 4h2l3-3v10L3 8H1z" fill="#fff"/><path d="M8 4q1.500 2 0 4M10 2.500q2.500 3.500 0 7" stroke="#eef2f7" fill="none"/></svg>
    <svg width="13" height="12" viewBox="0 0 13 12"><path d="M1 1h11v11H1z" fill="#ef5f98"/><path d="M2.500 4h8v5h-8z" fill="#fff"/><path d="M4.500 5.500v2M8.500 5.500v2" stroke="#ef5f98"/></svg>
    <svg width="13" height="13" viewBox="0 0 24 24"><circle cx="12" cy="12" r="11.500" fill="#191719"/><g fill="none" stroke="#e4e2e6" stroke-width="2"><use href="#blade"/><use href="#blade" transform="rotate(120 12 12)"/><use href="#blade" transform="rotate(240 12 12)"/></g><circle cx="6" cy="18" r="5" fill="#d92525"/></svg>
    <svg width="13" height="13" viewBox="0 0 13 13"><circle cx="6.500" cy="6.500" r="6" fill="#2c86e0"/><circle cx="6.500" cy="6.500" r="4.500" fill="none" stroke="#fff"/><path d="M5 4v5M8.500 4L5.500 6.500 8.500 9" stroke="#fff" fill="none" stroke-width="1.200"/></svg>
    <svg width="13" height="14" viewBox="0 0 13 14"><ellipse cx="6.500" cy="4.500" rx="3.500" ry="4" fill="#17171a"/><ellipse cx="6.500" cy="9" rx="5.500" ry="4" fill="#17171a"/><ellipse cx="6.500" cy="10" rx="3.200" ry="3" fill="#fff"/><path d="M2.500 6.500q4 2 8 0v1.800q-4 1.700-8 0z" fill="#dd2a2a"/><path d="M2 13h3.500M7.500 13H11" stroke="#f0a020" stroke-width="1.800"/><circle cx="5.300" cy="3.500" r=".9" fill="#fff"/><circle cx="7.700" cy="3.500" r=".9" fill="#fff"/></svg>
    <svg width="13" height="13" viewBox="0 0 24 24"><circle cx="12.500" cy="12.500" r="10.500" fill="#4fb82f"/><path d="M6 12a6 6 0 0 1 13 0zM6 14.500h13q-2 5-6.500 5T6 14.500z" fill="#f6fff2"/></svg>
    <svg width="13" height="13" viewBox="0 0 13 13"><path d="M0 4h3l5-4v13L3 9H0z" fill="#b4502c"/><path d="M5 3l3-3v13L5 10z" fill="#e08a5a"/><path d="M9.500 4q1.500 2.500 0 5M11 2q3 4.500 0 9" stroke="#d5a08a" fill="none"/></svg>
    <svg width="13" height="13" viewBox="0 0 13 13"><circle cx="6.500" cy="6.500" r="6.200" fill="#4aa52c"/><path d="M3 1q7-2 9.500 4l-1 5-4 2.500Q2 13 .5 8z" fill="#f7e63a"/><path d="M6.500 3v7M3 6.500h7" stroke="#2e8f22" stroke-width="2.400"/></svg>
    <svg width="13" height="12" viewBox="0 0 13 12"><path d="M4.500 3.500h8v6h-8zM6 11.500h5" fill="none" stroke="#fff" stroke-width="1.200"/><path d="M1 0v3h2.500V0M2.200 3v8" fill="none" stroke="#fff"/></svg>
    <time class="ml-[7px] w-[52px] text-center text-[10px] leading-[14px] text-white">14:57<br>2019/11/3</time>
    <button class="ml-[-2px] h-[31px] w-[12px] border-l border-[#3f4f66] bg-gradient-to-r from-[#5c6f88] to-[#8d9db3]" aria-label="显示桌面"></button>
  </div>
</footer>
</body>
</html>
